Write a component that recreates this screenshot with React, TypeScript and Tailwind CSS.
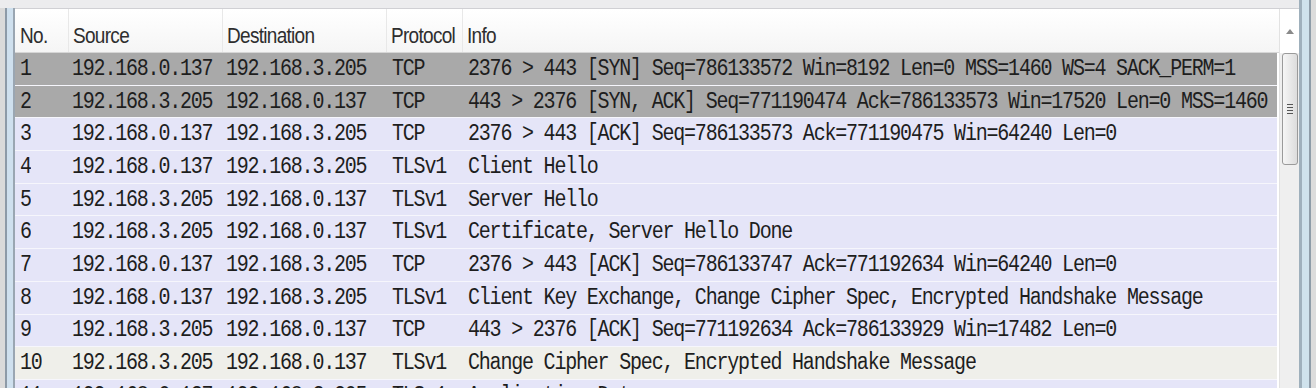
const packets = [
  { no: "1", src: "192.168.0.137", dst: "192.168.3.205", proto: "TCP", info: "2376 > 443 [SYN] Seq=786133572 Win=8192 Len=0 MSS=1460 WS=4 SACK_PERM=1", kind: "sel" },
  { no: "2", src: "192.168.3.205", dst: "192.168.0.137", proto: "TCP", info: "443 > 2376 [SYN, ACK] Seq=771190474 Ack=786133573 Win=17520 Len=0 MSS=1460", kind: "sel" },
  { no: "3", src: "192.168.0.137", dst: "192.168.3.205", proto: "TCP", info: "2376 > 443 [ACK] Seq=786133573 Ack=771190475 Win=64240 Len=0", kind: "tcp" },
  { no: "4", src: "192.168.0.137", dst: "192.168.3.205", proto: "TLSv1", info: "Client Hello", kind: "tcp" },
  { no: "5", src: "192.168.3.205", dst: "192.168.0.137", proto: "TLSv1", info: "Server Hello", kind: "tcp" },
  { no: "6", src: "192.168.3.205", dst: "192.168.0.137", proto: "TLSv1", info: "Certificate, Server Hello Done", kind: "tcp" },
  { no: "7", src: "192.168.0.137", dst: "192.168.3.205", proto: "TCP", info: "2376 > 443 [ACK] Seq=786133747 Ack=771192634 Win=64240 Len=0", kind: "tcp" },
  { no: "8", src: "192.168.0.137", dst: "192.168.3.205", proto: "TLSv1", info: "Client Key Exchange, Change Cipher Spec, Encrypted Handshake Message", kind: "tcp" },
  { no: "9", src: "192.168.3.205", dst: "192.168.0.137", proto: "TCP", info: "443 > 2376 [ACK] Seq=771192634 Ack=786133929 Win=17482 Len=0", kind: "tcp" },
  { no: "10", src: "192.168.3.205", dst: "192.168.0.137", proto: "TLSv1", info: "Change Cipher Spec, Encrypted Handshake Message", kind: "plain" },
  { no: "11", src: "192.168.0.137", dst: "192.168.3.205", proto: "TLSv1", info: "Application Data", kind: "tcp" },
];

const rowBg: Record<string, string> = {
  sel: "bg-[#a9a9a9]",
  tcp: "bg-[#e5e5f8]",
  plain: "bg-[#efefea]",
};

const cols = "grid grid-cols-[53px_154px_164px_76px_1fr]";

// the capture is stretched a little vertically, so the text is too
const tall = "scale-y-[1.15]";

export default function App() {
  return (
    <div className="w-[1316px] h-[388px] overflow-hidden flex bg-[#ececee]">
      {/* left window frame */}
      <div className="w-[15px] flex pt-[8px] shrink-0">
        <div className="w-[5px] bg-[#dadada]" />
        <div className="w-[2px] bg-[#8d9aa7]" />
        <div className="w-[6px] bg-[#cfe0ee]" />
        <div className="w-[2px] bg-[#9aa6b2]" />
      </div>

      <div className="flex-1 flex flex-col min-h-0">
        <div className="h-[9px] shrink-0 bg-[#ececee] border-b border-[#d0d0d4]" />
        <div className="flex flex-1 min-h-0">
          <div className="flex-1 bg-white flex flex-col min-h-0 overflow-hidden">
            {/* header */}
            <div
              className={`${cols} h-[44px] shrink-0 bg-gradient-to-b from-white to-[#f5f5f5] border-b border-[#d6d6d6] text-[19px] tracking-[-0.7px] text-[#2e2e2e]`}
              style={{ fontFamily: '"Liberation Sans", Arial, sans-serif' }}
            >
              <div className="pl-[5px] pt-[13px]"><div className="scale-y-[1.2]">No.</div></div>
              <div className="pl-[4px] pt-[13px] border-l border-[#e8e8e8]"><div className="scale-y-[1.2]">Source</div></div>
              <div className="pl-[4px] pt-[13px] border-l border-[#e8e8e8]"><div className="scale-y-[1.2]">Destination</div></div>
              <div className="pl-[4px] pt-[13px] border-l border-[#e8e8e8]"><div className="scale-y-[1.2]">Protocol</div></div>
              <div className="pl-[4px] pt-[13px] border-l border-[#e8e8e8]"><div className="scale-y-[1.2]">Info</div></div>
            </div>

            {/* rows */}
            <div
              className="text-[20px] tracking-[-1.2px] text-[#1e1e1e] pr-[2px] shrink-0"
              style={{ fontFamily: '"Liberation Mono", "DejaVu Sans Mono", monospace' }}
            >
              {packets.map((p) => (
                <div
                  key={p.no}
                  className={`${cols} h-[32.7px] items-center whitespace-nowrap border-b border-[#f6f6fc] ${rowBg[p.kind]}`}
                >
                  <div className={`pl-[5px] ${tall}`}>{p.no}</div>
                  <div className={`pl-[4px] ${tall}`}>{p.src}</div>
                  <div className={`pl-[4px] ${tall}`}>{p.dst}</div>
                  <div className={`pl-[6px] ${tall}`}>{p.proto}</div>
                  <div className={`pl-[6px] overflow-hidden ${tall}`}>{p.info}</div>
                </div>
              ))}
            </div>
          </div>

          {/* vertical scrollbar */}
          <div className="w-[20px] bg-[#efefef] flex flex-col items-center border-l border-[#e2e2e2] shrink-0">
            <div className="h-[44px] w-full bg-white flex items-center justify-center shrink-0">
              <svg width="8" height="6" viewBox="0 0 8 6">
                <path d="M0 6 L4 1 L8 6 Z" fill="#8a8a8a" />
              </svg>
            </div>
            <div className="w-[16px] h-[112px] shrink-0 rounded-[3px] border border-[#9a9a9a] bg-gradient-to-r from-[#f6f6f6] via-[#e9e9e9] to-[#dcdcdc] flex items-center justify-center">
              <div className="flex flex-col gap-[2px]">
                <div className="w-[6px] h-px bg-[#555]" />
                <div className="w-[6px] h-px bg-[#555]" />
                <div className="w-[6px] h-px bg-[#555]" />
                <div className="w-[6px] h-px bg-[#555]" />
              </div>
            </div>
          </div>
        </div>
      </div>

      {/* right window frame */}
      <div className="w-[17px] flex shrink-0">
        <div className="w-[3px] bg-[#9fb0bc]" />
        <div className="w-[7px] bg-[#cfe2ec]" />
        <div className="w-[2px] bg-[#8e9ca8]" />
        <div className="w-[5px] bg-[#dcdcdc]" />
      </div>
    </div>
  );
}
